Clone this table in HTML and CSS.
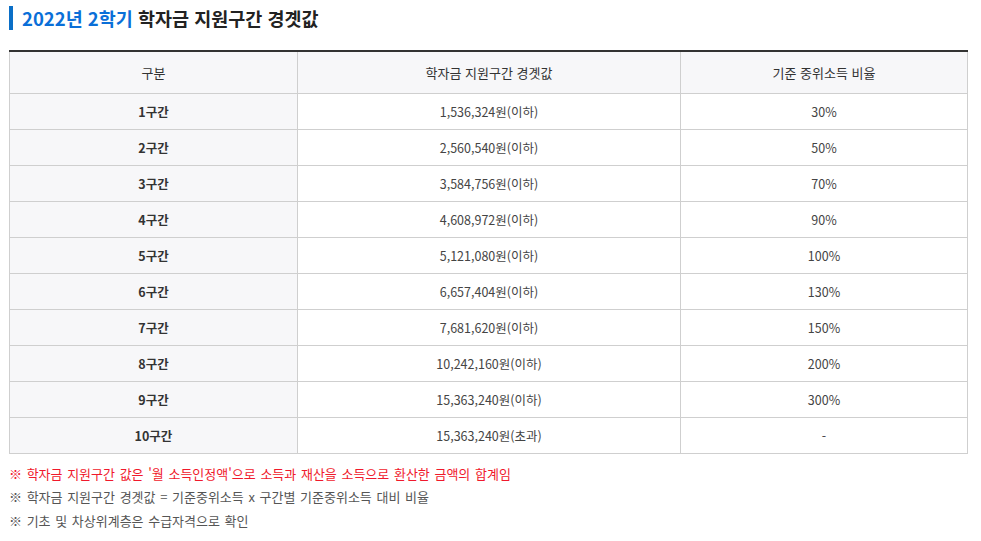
FILE: index.html
```html
<!DOCTYPE html>
<html lang="ko">
<head>
<meta charset="utf-8">
<link rel="stylesheet" href="styles.css">
</head>
<body>
<div class="page">
  <h2 class="title"><span class="hl">2022년 2학기</span> 학자금 지원구간 경곗값</h2>
  <table class="tbl">
    <thead>
      <tr><th>구분</th><th>학자금 지원구간 경곗값</th><th>기준 중위소득 비율</th></tr>
    </thead>
    <tbody>
      <tr><th>1구간</th><td>1,536,324원(이하)</td><td>30%</td></tr>
      <tr><th>2구간</th><td>2,560,540원(이하)</td><td>50%</td></tr>
      <tr><th>3구간</th><td>3,584,756원(이하)</td><td>70%</td></tr>
      <tr><th>4구간</th><td>4,608,972원(이하)</td><td>90%</td></tr>
      <tr><th>5구간</th><td>5,121,080원(이하)</td><td>100%</td></tr>
      <tr><th>6구간</th><td>6,657,404원(이하)</td><td>130%</td></tr>
      <tr><th>7구간</th><td>7,681,620원(이하)</td><td>150%</td></tr>
      <tr><th>8구간</th><td>10,242,160원(이하)</td><td>200%</td></tr>
      <tr><th>9구간</th><td>15,363,240원(이하)</td><td>300%</td></tr>
      <tr><th>10구간</th><td>15,363,240원(초과)</td><td>-</td></tr>
    </tbody>
  </table>
  <ul class="notes">
    <li class="red">※ 학자금 지원구간 값은 '월 소득인정액'으로 소득과 재산을 소득으로 환산한 금액의 합계임</li>
    <li>※ 학자금 지원구간 경곗값 = 기준중위소득 x 구간별 기준중위소득 대비 비율</li>
    <li>※ 기초 및 차상위계층은 수급자격으로 확인</li>
  </ul>
</div>
</body>
</html>
```
FILE: styles.css
```css
* { box-sizing: border-box; }
html, body { margin: 0; padding: 0; background: #fff; }
body {
  font-family: "Noto Sans CJK KR", "Noto Sans", sans-serif;
  color: #444;
}
.page { padding: 6px 13px 0 9px; }
.title {
  margin: 0;
  height: 24px;
  border-left: 4px solid #0b6fc7;
  padding-left: 9px;
  font-size: 18.5px;
  line-height: 24px;
  font-weight: 700;
  color: #222;
}
.title .hl { color: #0a6fd8; }
.tbl {
  margin-top: 20px;
  width: 959px;
  border-collapse: collapse;
  border-top: 2px solid #333;
  table-layout: fixed;
  font-size: 12.5px;
}
.tbl th, .tbl td {
  border: 1px solid #cfcfcf;
  text-align: center;
  padding: 0;
  height: 36px;
  color: #444;
}
.tbl thead th {
  height: 42px;
  background: #f7f7f9;
  font-weight: 400;
  color: #333;
  font-size: 13px;
}
.tbl thead th:nth-child(1) { width: 288px; }
.tbl thead th:nth-child(2) { width: 383px; }
.tbl tbody th {
  background: #f7f7f9;
  font-weight: 700;
  color: #333;
}
.notes {
  list-style: none;
  margin: 8px 0 0;
  padding: 0;
  font-size: 13px;
  line-height: 23.5px;
  word-spacing: 1px;
  color: #555;
}
.notes .red { color: #f0192c; }
```
